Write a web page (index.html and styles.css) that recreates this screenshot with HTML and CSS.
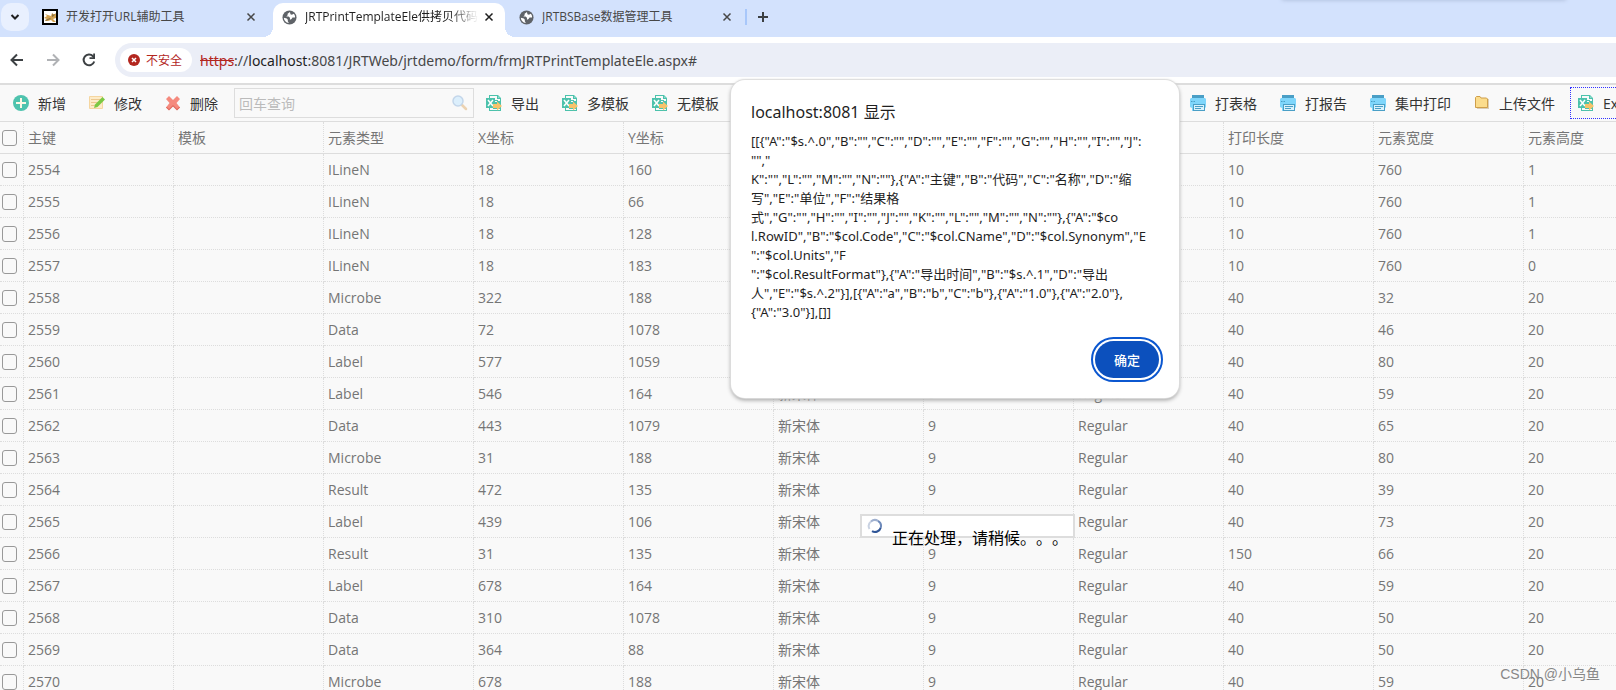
FILE: index.html
```html
<!DOCTYPE html>
<html lang="zh-CN">
<head>
<meta charset="utf-8">
<title>JRTPrintTemplateEle</title>
<link rel="stylesheet" href="styles.css">
</head>
<body>
<svg class="sprite" aria-hidden="true">
  <symbol id="i-excel" viewBox="0 0 16 16">
    <path fill="#4cc2ac" d="M3 0h9l3 3v13H3v-3H0V3h3z"/>
    <path fill="#fafafa" d="M4 1h7v3h3v2h-2V5H9V3H4zM9 6h2v1H9zM4 13h3v1h7v1H4z"/>
    <path fill="#8fdccd" d="M12 1v2h2z"/>
    <path fill="none" stroke="#fff" stroke-width="1.500" d="M2 5l5 6M7 5l-5 6"/>
    <path fill="#f5c36b" d="M7 9h4V6.500l5 4.500-5 4.500V13H7z"/>
  </symbol>
  <symbol id="i-print" viewBox="0 0 16 16">
    <path fill="#4a9fc6" d="M2 0h12v3H2z"/>
    <path fill="#7fd6fb" d="M1 3h14l1 1v8l-1 1v3H2v-3l-2-1V4z"/>
    <path fill="#4a9fc6" d="M1 6h1.500v1H1zM3.500 6H5v1H3.500zM3 9h12v7H3z"/>
    <path fill="#d9f3fd" d="M4 10h10v5H4z"/>
    <path fill="#4a9fc6" d="M5 11h8v1H5zM5 13h6v1H5z"/>
  </symbol>
  <symbol id="i-globe" viewBox="0 0 16 16">
    <circle cx="8" cy="8" r="7.500" fill="#5f6368"/>
    <path fill="#fff" d="M8.500 2.200L6 4v1.600L4.600 7H7l1.500 1.300v2l1.700-.8 1-1.500h2.600c.5-1-.1-3-1.200-4.100L10.500 5 9 4.500zM2 8.200l3.200.8 1 1.500v1.600l1.100 1.700C4.500 13.700 2 11 2 8.200z"/>
  </symbol>
  <symbol id="i-close" viewBox="0 0 10 10"><path stroke="currentColor" stroke-width="1.500" d="M1.500 1.500l7 7M8.500 1.500l-7 7"/></symbol>
</svg>

<header class="browser">
  <div class="tabstrip">
    <button class="tab-search" aria-label="搜索标签页"><svg width="10" height="8" viewBox="0 0 10 8"><path fill="none" stroke="#1f1f1f" stroke-width="2" d="M1.500 2L5 5.500 8.500 2"/></svg></button>
    <div class="tab tab-first">
      <svg class="favicon" viewBox="0 0 16 16"><path fill="#fff" stroke="#000" stroke-width="2" d="M1 1h14v14H1z"/><path fill="#d2a252" d="M3 5l3 1 3 1 1-3 1 1h2l1-1v5l-3 1 3 3h-3l-2-2-3 1H3l2-2-3-1 3-2z"/><path fill="#8d7240" d="M10 4l1 2 2-1-1 2-2 1zM3 11l5-2 1 1-3 1-2 1z"/></svg>
      <span class="tab-title">开发打开URL辅助工具</span>
      <button class="tab-close" aria-label="关闭"><svg width="10" height="10"><use href="#i-close"/></svg></button>
    </div>
    <div class="tab tab-active">
      <svg class="favicon globe"><use href="#i-globe"/></svg>
      <span class="tab-title faded">JRTPrintTemplateEle供拷贝代码</span>
      <button class="tab-close" aria-label="关闭"><svg width="10" height="10"><use href="#i-close"/></svg></button>
    </div>
    <div class="tab tab-last">
      <svg class="favicon globe"><use href="#i-globe"/></svg>
      <span class="tab-title">JRTBSBase数据管理工具</span>
      <button class="tab-close" aria-label="关闭"><svg width="10" height="10"><use href="#i-close"/></svg></button>
    </div>
    <span class="tab-sep"></span>
    <button class="tab-new" aria-label="新标签页"><svg width="12" height="12" viewBox="0 0 12 12"><path stroke="#3c4043" stroke-width="2" d="M6 1v10M1 6h10"/></svg></button>
    <span class="window-shadow"></span>
  </div>
  <nav class="navbar">
    <button class="nav-btn" aria-label="后退"><svg width="14" height="14" viewBox="0 0 14 14"><path fill="none" stroke="#3c4043" stroke-width="2" d="M13 7H2M7 1.500L1.500 7 7 12.500"/></svg></button>
    <button class="nav-btn" aria-label="前进"><svg width="14" height="14" viewBox="0 0 14 14"><path fill="none" stroke="#b0b2b5" stroke-width="2" d="M1 7h11M7 1.500L12.500 7 7 12.500"/></svg></button>
    <button class="nav-btn" aria-label="重新加载"><svg width="14" height="14" viewBox="0 0 14 14"><path fill="none" stroke="#3c4043" stroke-width="2" d="M12.200 8.500A5.400 5.400 0 1 1 11 3.200L12 4.500"/><path fill="#3c4043" d="M13 .5V6H7.500V4.200h3.700V.5z"/></svg></button>
    <div class="omnibox">
      <button class="chip"><svg width="12" height="12" viewBox="0 0 12 12"><circle cx="6" cy="6" r="6" fill="#b3261e"/><path stroke="#fff" stroke-width="1.500" d="M4 4l4 4M8 4L4 8"/></svg>不安全</button>
      <span class="url"><s>https</s>://<b>localhost</b>:8081/JRTWeb/jrtdemo/form/frmJRTPrintTemplateEle.aspx#</span>
    </div>
  </nav>
</header>

<main class="page">
  <div class="toolbar">
    <div class="group">
      <button class="tool"><svg class="icon" viewBox="0 0 16 16"><circle cx="8" cy="8" r="8" fill="#4fc3ae"/><path stroke="#fff8e6" stroke-width="2" d="M8 3v10M3 8h10"/></svg>新增</button>
      <button class="tool"><svg class="icon" viewBox="0 0 16 16"><path fill="#fdebc8" stroke="#f5d6a0" d="M.5 1.500h13v12H.5z"/><path stroke="#ecc88e" d="M2 4.500h10M2 7.500h8M2 10.500h4"/><path fill="#7bc943" d="M5 13l1-3.500L13.500 2 16 4.500 8.500 12z"/></svg>修改</button>
      <button class="tool"><svg class="icon" viewBox="0 0 16 16"><path fill="#f58a7e" d="M4 1l4 4 4-4 3 3-3.500 4 3.500 4.500L12 15l-4-4-4 4-3-2.500L4.500 8 1 4z"/><path fill="#e06a5f" d="M1 12.500L4 15.500l4-4 4 4 3-3-.6-.8L12 14l-4-4-4 4-2.400-2.300z"/></svg>删除</button>
    </div>
    <div class="search">
      <input type="text" placeholder="回车查询" aria-label="回车查询">
      <svg width="16" height="16" viewBox="0 0 16 16"><path stroke="#ecd3b2" stroke-width="2.500" stroke-linecap="round" d="M10 10l4 4"/><circle cx="6" cy="6" r="5" fill="#dceffc" stroke="#c3d6ea" stroke-width="1.500"/></svg>
    </div>
    <div class="group">
      <button class="tool"><svg class="icon"><use href="#i-excel"/></svg>导出</button>
      <button class="tool"><svg class="icon"><use href="#i-excel"/></svg>多模板</button>
      <button class="tool"><svg class="icon"><use href="#i-excel"/></svg>无模板</button>
    </div>
    <div class="group group-print">
      <button class="tool"><svg class="icon"><use href="#i-print"/></svg>打表格</button>
      <button class="tool"><svg class="icon"><use href="#i-print"/></svg>打报告</button>
      <button class="tool"><svg class="icon"><use href="#i-print"/></svg>集中打印</button>
      <button class="tool"><svg class="icon" viewBox="0 0 16 16"><path fill="#d9cdb8" d="M2 4h13v10H3z"/><path fill="#fbdc8c" stroke="#cf9f4a" d="M1.500 12.500v-10l1-1H6l1 1.500h5.500l1 1v8.500z"/></svg>上传文件</button>
      <button class="tool tool-focus"><svg class="icon"><use href="#i-excel"/></svg>Excel</button>
    </div>
  </div>

  <table class="grid">
    <colgroup><col class="c-check"><col span="11" class="c-data"></colgroup>
    <thead>
      <tr><th><input type="checkbox" aria-label="全选"></th><th>主键</th><th>模板</th><th>元素类型</th><th>X坐标</th><th>Y坐标</th><th></th><th></th><th></th><th>打印长度</th><th>元素宽度</th><th>元素高度</th></tr>
    </thead>
    <tbody>
      <tr><td><input type="checkbox" aria-label="2554"></td><td>2554</td><td></td><td>ILineN</td><td>18</td><td>160</td><td></td><td></td><td></td><td>10</td><td>760</td><td>1</td></tr>
      <tr><td><input type="checkbox" aria-label="2555"></td><td>2555</td><td></td><td>ILineN</td><td>18</td><td>66</td><td></td><td></td><td></td><td>10</td><td>760</td><td>1</td></tr>
      <tr><td><input type="checkbox" aria-label="2556"></td><td>2556</td><td></td><td>ILineN</td><td>18</td><td>128</td><td></td><td></td><td></td><td>10</td><td>760</td><td>1</td></tr>
      <tr><td><input type="checkbox" aria-label="2557"></td><td>2557</td><td></td><td>ILineN</td><td>18</td><td>183</td><td></td><td></td><td></td><td>10</td><td>760</td><td>0</td></tr>
      <tr><td><input type="checkbox" aria-label="2558"></td><td>2558</td><td></td><td>Microbe</td><td>322</td><td>188</td><td></td><td></td><td></td><td>40</td><td>32</td><td>20</td></tr>
      <tr><td><input type="checkbox" aria-label="2559"></td><td>2559</td><td></td><td>Data</td><td>72</td><td>1078</td><td></td><td></td><td></td><td>40</td><td>46</td><td>20</td></tr>
      <tr><td><input type="checkbox" aria-label="2560"></td><td>2560</td><td></td><td>Label</td><td>577</td><td>1059</td><td></td><td></td><td></td><td>40</td><td>80</td><td>20</td></tr>
      <tr><td><input type="checkbox" aria-label="2561"></td><td>2561</td><td></td><td>Label</td><td>546</td><td>164</td><td>新宋体</td><td>9</td><td>Regular</td><td>40</td><td>59</td><td>20</td></tr>
      <tr><td><input type="checkbox" aria-label="2562"></td><td>2562</td><td></td><td>Data</td><td>443</td><td>1079</td><td>新宋体</td><td>9</td><td>Regular</td><td>40</td><td>65</td><td>20</td></tr>
      <tr><td><input type="checkbox" aria-label="2563"></td><td>2563</td><td></td><td>Microbe</td><td>31</td><td>188</td><td>新宋体</td><td>9</td><td>Regular</td><td>40</td><td>80</td><td>20</td></tr>
      <tr><td><input type="checkbox" aria-label="2564"></td><td>2564</td><td></td><td>Result</td><td>472</td><td>135</td><td>新宋体</td><td>9</td><td>Regular</td><td>40</td><td>39</td><td>20</td></tr>
      <tr><td><input type="checkbox" aria-label="2565"></td><td>2565</td><td></td><td>Label</td><td>439</td><td>106</td><td>新宋体</td><td></td><td>Regular</td><td>40</td><td>73</td><td>20</td></tr>
      <tr><td><input type="checkbox" aria-label="2566"></td><td>2566</td><td></td><td>Result</td><td>31</td><td>135</td><td>新宋体</td><td>9</td><td>Regular</td><td>150</td><td>66</td><td>20</td></tr>
      <tr><td><input type="checkbox" aria-label="2567"></td><td>2567</td><td></td><td>Label</td><td>678</td><td>164</td><td>新宋体</td><td>9</td><td>Regular</td><td>40</td><td>59</td><td>20</td></tr>
      <tr><td><input type="checkbox" aria-label="2568"></td><td>2568</td><td></td><td>Data</td><td>310</td><td>1078</td><td>新宋体</td><td>9</td><td>Regular</td><td>40</td><td>50</td><td>20</td></tr>
      <tr><td><input type="checkbox" aria-label="2569"></td><td>2569</td><td></td><td>Data</td><td>364</td><td>88</td><td>新宋体</td><td>9</td><td>Regular</td><td>40</td><td>50</td><td>20</td></tr>
      <tr><td><input type="checkbox" aria-label="2570"></td><td>2570</td><td></td><td>Microbe</td><td>678</td><td>188</td><td>新宋体</td><td>9</td><td>Regular</td><td>40</td><td>59</td><td>20</td></tr>
    </tbody>
  </table>
</main>

<div class="loading" role="status">
  <svg width="16" height="16" viewBox="0 0 16 16" fill="none" stroke-width="2"><path stroke="#c9d2e2" d="M2.500 11A6 6 0 0 1 4 3.500"/><path stroke="#9fb0cf" d="M4 3.500A6 6 0 0 1 11 2.800"/><path stroke="#6f8bbb" d="M11 2.800A6 6 0 0 1 13.800 9.500"/><path stroke="#2f5597" d="M13.800 9.500A6 6 0 0 1 5 13.200"/></svg>
  <span>正在处理，请稍候。。。</span>
</div>

<div class="dialog" role="alertdialog" aria-labelledby="dlg-title">
  <h1 id="dlg-title">localhost:8081 显示</h1>
  <p>[[{"A":"$s.^.0","B":"","C":"","D":"","E":"","F":"","G":"","H":"","I":"","J":<br>"","<br>K":"","L":"","M":"","N":""},{"A":"主键","B":"代码","C":"名称","D":"缩<br>写","E":"单位","F":"结果格<br>式","G":"","H":"","I":"","J":"","K":"","L":"","M":"","N":""},{"A":"$co<br>l.RowID","B":"$col.Code","C":"$col.CName","D":"$col.Synonym","E<br>":"$col.Units","F<br>":"$col.ResultFormat"},{"A":"导出时间","B":"$s.^.1","D":"导出<br>人","E":"$s.^.2"}],[{"A":"a","B":"b","C":"b"},{"A":"1.0"},{"A":"2.0"},<br>{"A":"3.0"}],[]]</p>
  <button class="ok">确定</button>
</div>

<div class="watermark">CSDN @小乌鱼</div>
</body>
</html>
```
FILE: styles.css
```css
* { box-sizing: border-box; }
body {
  margin: 0;
  height: 100vh;
  overflow: hidden;
  position: relative;
  background: #f9f9f9;
  font-family: "Open Sans", "Noto Sans CJK SC", sans-serif;
  font-size: 14px;
  color: #333;
}
button { border: 0; padding: 0; background: none; font: inherit; color: inherit; }
svg { display: block; flex: none; }
.sprite { position: absolute; width: 0; height: 0; }

/* browser chrome */
.browser { background: #fff; font-size: 12px; }
.tabstrip {
  position: relative;
  display: flex;
  align-items: stretch;
  height: 37px;
  padding: 3px 0 0 1px;
  background: #d3e2fd;
}
.tab-search {
  display: grid;
  place-items: center;
  width: 28px;
  height: 28px;
  margin-right: 4px;
  border-radius: 10px;
  background: #e9f0fe;
}
.tab {
  position: relative;
  display: flex;
  align-items: center;
  width: 232px;
  padding: 0 9px 6px 14px;
  color: #474747;
}
.tab-first { width: 240px; padding-left: 9px; padding-right: 15px; }
.tab-last { padding-right: 3px; }
.favicon { width: 16px; height: 16px; margin-right: 8px; }
.globe { width: 15px; height: 15px; }
.tab-title { flex: 1; white-space: nowrap; overflow: hidden; line-height: 20px; }
.faded { color: #1f1f1f; -webkit-mask-image: linear-gradient(90deg, #000 82%, transparent 98%); mask-image: linear-gradient(90deg, #000 82%, transparent 98%); }
.tab-close { display: grid; place-items: center; width: 14px; height: 14px; }
.tab-active {
  background: #fff;
  border-radius: 10px 10px 0 0;
  padding-left: 9px;
  color: #1f1f1f;
}
.tab-active::before, .tab-active::after {
  content: "";
  position: absolute;
  bottom: 0;
  width: 10px;
  height: 10px;
}
.tab-active::before { right: 100%; background: radial-gradient(circle at 0 0, transparent 10px, #fff 10px); }
.tab-active::after { left: 100%; background: radial-gradient(circle at 100% 0, transparent 10px, #fff 10px); }
.tab-sep { width: 2px; height: 16px; margin: 6px 10px 0 8px; background: #a8c7fa; }
.tab-new { display: grid; place-items: center; width: 12px; height: 28px; }
.window-shadow {
  position: absolute;
  top: -4px;
  left: 1282px;
  width: 284px;
  height: 4px;
  box-shadow: 0 0 4px #a9b8d4;
}
.navbar { display: flex; align-items: center; height: 46px; padding-left: 10px; gap: 22px; }
.nav-btn { width: 14px; height: 14px; }
.omnibox {
  flex: 1;
  display: flex;
  align-items: center;
  gap: 8px;
  height: 34px;
  margin-left: -3px;
  padding-left: 5px;
  border-radius: 17px 0 0 17px;
  background: #ebeef7;
}
.chip {
  display: flex;
  align-items: center;
  gap: 6px;
  height: 24px;
  padding: 0 10px 0 8px;
  border-radius: 12px;
  background: #fff;
  color: #b3261e;
}
.url { font-family: "Noto Sans", sans-serif; font-size: 14px; color: #474747; white-space: nowrap; }
.url s { color: #b3261e; }
.url b { font-weight: 400; color: #1f1f1f; }

/* page */
.page { border-top: 2px solid #ddd; overflow: hidden; }
.toolbar {
  display: flex;
  align-items: center;
  height: 37px;
  padding-left: 5px;
  border-bottom: 1px solid #ddd;
}
.group { display: flex; flex: none; gap: 7px; }
.group-print { margin-left: 455px; }
.tool {
  display: flex;
  flex: none;
  align-items: center;
  gap: 9px;
  height: 32px;
  padding: 0 8px;
  white-space: nowrap;
}
.tool-focus { outline: 1px dotted #33f; outline-offset: -1px; }
.icon { width: 16px; height: 16px; }
.search {
  display: flex;
  flex: none;
  align-items: center;
  width: 240px;
  height: 30px;
  margin: 0 4px 0 8px;
  padding-right: 5px;
  border: 1px solid #ddd;
}
.search input {
  flex: 1;
  min-width: 0;
  padding: 0 4px;
  border: 0;
  background: none;
  font: inherit;
}
.search input::placeholder { color: #bbb; }

.grid {
  table-layout: fixed;
  width: 1674px;
  border-spacing: 0;
  color: #757575;
}
.c-check { width: 24px; }
.c-data { width: 150px; }
.grid th, .grid td {
  height: 32px;
  padding: 0 4px;
  border-right: 1px dotted #ddd;
  border-bottom: 1px dotted #ddd;
  font-weight: 400;
  line-height: 20px;
  text-align: left;
  white-space: nowrap;
}
.grid th { border-bottom-style: solid; }
.grid th:first-child, .grid td:first-child { padding: 0 0 0 2px; }
.grid input {
  display: block;
  appearance: none;
  width: 15px;
  height: 16px;
  margin: 0;
  border: 1px solid #999;
  border-radius: 3px;
}

/* overlays */
.loading {
  position: absolute;
  left: 860px;
  top: 514px;
  display: flex;
  gap: 9px;
  width: 215px;
  height: 24px;
  padding: 2px 0 0 5px;
  border: 2px solid #ddd;
  background: #fff;
  color: #000;
  font-size: 16px;
  white-space: nowrap;
  text-spacing-trim: space-all;
}
.loading span { padding-top: 8px; line-height: 24px; }
.dialog {
  position: absolute;
  left: 731px;
  top: 80px;
  width: 448px;
  padding: 19px 16px 16px 20px;
  border-radius: 14px;
  background: #fff;
  box-shadow: 0 0 1px 1px #ddd, 0 2px 4px #999;
  color: #1f1f1f;
  font-family: "Noto Sans", "Noto Sans CJK SC", sans-serif;
}
.dialog h1 { margin: 0 0 7px; font-size: 16px; font-weight: 400; line-height: 26px; }
.dialog p { margin: 0; font-size: 13px; line-height: 19px; white-space: nowrap; }
.ok {
  display: block;
  width: 64px;
  height: 37px;
  margin: 19px 4px 4px auto;
  border-radius: 19px;
  background: #0c50bd;
  outline: 2px solid #0b57d0;
  outline-offset: 2px;
  color: #fff;
  font-size: 13px;
  font-weight: 500;
}
.watermark {
  position: absolute;
  right: 16px;
  bottom: 6px;
  font-family: "Liberation Sans", "Noto Sans CJK SC", sans-serif;
  line-height: 20px;
  color: #888;
}
```
